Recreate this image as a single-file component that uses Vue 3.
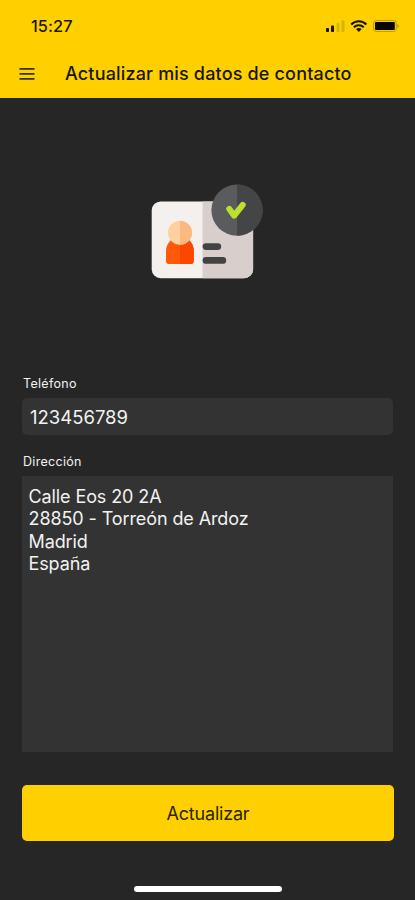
<script setup>
import { ref } from 'vue'

const phone = ref('123456789')
const address = ref(['Calle Eos 20 2A', '28850 - Torreón de Ardoz', 'Madrid', 'España'])
</script>

<template>
  <main class="screen">
    <header class="top">
      <div class="status">
        <span class="time">15:27</span>
        <svg class="indicators" width="76" height="14" viewBox="0 0 76 14">
          <rect x="1" y="9" width="3" height="4" rx="0.7" fill="#161400" />
          <rect x="6" y="6.6" width="3" height="6.4" rx="0.7" fill="#161400" />
          <rect x="11.5" y="4" width="3" height="9" rx="0.7" fill="#d9b300" />
          <rect x="16.5" y="1.6" width="3" height="11.4" rx="0.7" fill="#d9b300" />
          <g fill="none" stroke="#161400" stroke-width="2.1">
            <path d="M26.2 5.4 C30.5 1.1 37.1 1.1 41.4 5.4" />
            <path d="M28.9 8.2 C31.6 5.5 36 5.5 38.7 8.2" />
          </g>
          <path d="M31 10 Q33.8 8 36.6 10 L33.8 12.9 Z" fill="#161400" />
          <rect x="48.6" y="1.6" width="22.6" height="10.8" rx="2.4" fill="none" stroke="#b99a08" stroke-width="1" />
          <rect x="50" y="3" width="19.8" height="8" rx="1" fill="#090800" />
          <path d="M72.4 4.9 Q75.6 7 72.4 9.2 Z" fill="#b99a08" />
        </svg>
      </div>
      <div class="bar">
        <svg class="menu" width="16" height="14" viewBox="0 0 16 14" fill="none" stroke="#3b3201" stroke-width="1.8">
          <path d="M.5 1.8H15.5M.5 6.8H15.5M.5 11.8H15.5" />
        </svg>
        <h1>Actualizar mis datos de contacto</h1>
      </div>
    </header>

    <section class="hero">
      <svg width="115" height="98" viewBox="150 182 115 98">
        <rect x="151.7" y="201.4" width="101.4" height="76.8" rx="9" fill="#f4f0ed" />
        <path d="M202.5 201.4H244.1A9 9 0 0 1 253.1 210.4V269.2A9 9 0 0 1 244.1 278.2H202.5Z" fill="#d8cecb" />
        <path d="M171 240H189Q193.8 244.5 193.8 251V261Q193.8 264 190.8 264H169Q166 264 166 261V251Q166 244.5 171 240Z" fill="#ff5a0a" />
        <path d="M180 240H189Q193.8 244.5 193.8 251V261Q193.8 264 190.8 264H180Z" fill="#fc4700" />
        <circle cx="180" cy="232.8" r="12" fill="#ffcf9e" />
        <path d="M180 220.8A12 12 0 0 1 180 244.8Z" fill="#fbb982" />
        <rect x="202.6" y="243.2" width="18.6" height="6.8" rx="3.4" fill="#444344" />
        <rect x="202.6" y="257" width="23.6" height="6.8" rx="3.4" fill="#444344" />
        <circle cx="237" cy="210.2" r="25.6" fill="#5a5b5c" />
        <path d="M237 184.6A25.6 25.6 0 0 1 237 235.8Z" fill="#444546" />
        <path d="M229.3 209L234.2 215.6L242.7 204.9" fill="none" stroke="#bce02f" stroke-width="6" stroke-linecap="round" stroke-linejoin="round" />
      </svg>
    </section>

    <form class="form" @submit.prevent>
      <div class="label">Teléfono</div>
      <div class="field phone"><span>{{ phone }}</span></div>
      <div class="label second">Dirección</div>
      <div class="field address">
        <div v-for="line in address" :key="line"><span>{{ line }}</span></div>
      </div>
      <button class="submit" type="submit">Actualizar</button>
    </form>

    <div class="home"></div>
  </main>
</template>

<style>
body {
  background: #262626;
}
</style>

<style scoped>
.screen {
  box-sizing: border-box;
  width: 415px;
  height: 900px;
  display: flex;
  flex-direction: column;
  overflow: hidden;
  background: #262626;
  color: #f2f2f2;
  font-family: Inter, "Liberation Sans", sans-serif;
}
.top {
  flex: none;
  height: 98px;
  background: #ffd000;
  color: #191600;
}
.status {
  height: 50px;
  display: flex;
  align-items: center;
  justify-content: space-between;
  padding: 2px 14px 0 31px;
  box-sizing: border-box;
}
.time {
  font-size: 16.3px;
  font-weight: 500;
  letter-spacing: 0.1px;
}
.indicators {
  display: block;
}
.bar {
  height: 48px;
  display: flex;
  align-items: center;
  padding-left: 19px;
  gap: 30px;
}
h1 {
  margin: 0;
  font-size: 18px;
  font-weight: 500;
  letter-spacing: 0.17px;
  line-height: 20px;
  padding-bottom: 1px;
  white-space: nowrap;
}
.hero {
  flex: none;
  height: 277px;
  box-sizing: border-box;
  padding: 84px 0 0 150px;
}
.hero svg {
  display: block;
}
.form {
  padding: 0 22px;
}
.label {
  height: 23px;
  line-height: 17px;
  font-size: 12.5px;
  letter-spacing: 0.3px;
  padding-left: 1px;
}
.second {
  margin-top: 18px;
}
.field {
  background: #333333;
  box-sizing: border-box;
}
.phone {
  height: 37px;
  border-radius: 5px;
  padding-left: 8px;
  font-size: 18.5px;
  line-height: 38px;
}
.address {
  height: 276px;
  padding: 9.5px 6.5px;
  font-size: 18px;
  letter-spacing: -0.1px;
  line-height: 22.6px;
}
.submit {
  display: block;
  width: 372px;
  height: 56px;
  margin-top: 33px;
  padding: 0;
  border: 0;
  border-radius: 5px;
  background: #ffd000;
  color: #2c2500;
  font: 400 18px Inter, "Liberation Sans", sans-serif;
  letter-spacing: -0.2px;
}
.home {
  flex: none;
  width: 148px;
  height: 6px;
  margin: 45px 0 0 134px;
  border-radius: 3px;
  background: #ffffff;
}
</style>
